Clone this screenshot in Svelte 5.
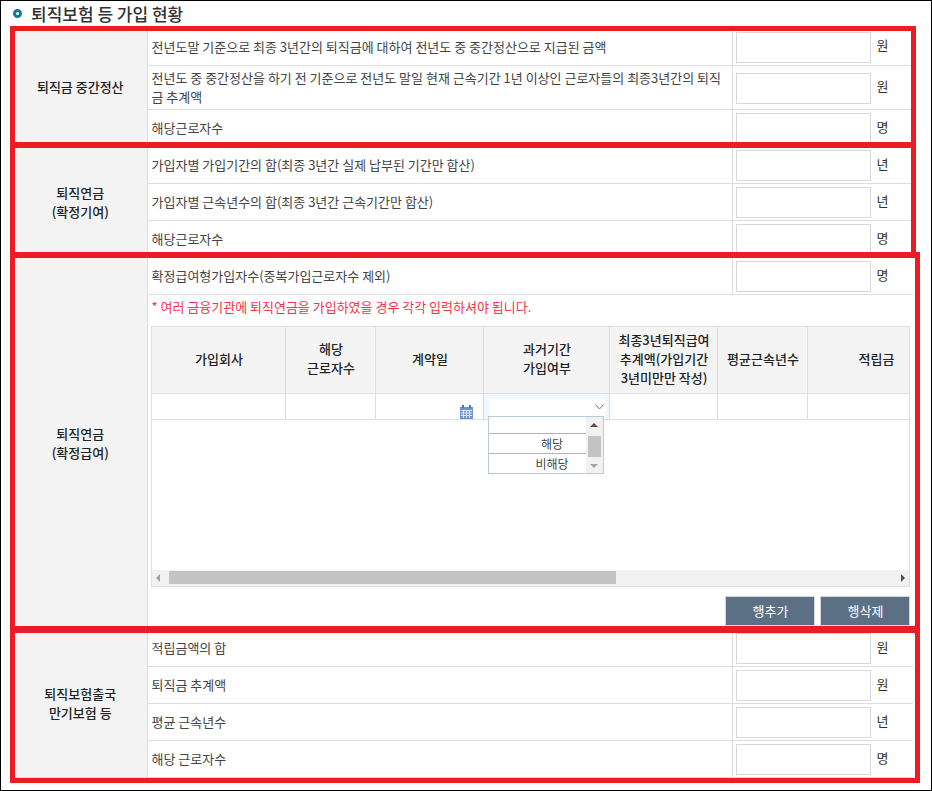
<script>
	const middle = [
		{ label: '전년도말 기준으로 최종 3년간의 퇴직금에 대하여 전년도 중 중간정산으로 지급된 금액', unit: '원' },
		{ label: '전년도 중 중간정산을 하기 전 기준으로 전년도 말일 현재 근속기간 1년 이상인 근로자들의 최종3년간의 퇴직금 추계액', unit: '원', tall: true },
		{ label: '해당근로자수', unit: '명' }
	];
	const contribution = [
		{ label: '가입자별 가입기간의 합(최종 3년간 실제 납부된 기간만 합산)', unit: '년' },
		{ label: '가입자별 근속년수의 합(최종 3년간 근속기간만 합산)', unit: '년' },
		{ label: '해당근로자수', unit: '명' }
	];
	const insurance = [
		{ label: '적립금액의 합', unit: '원' },
		{ label: '퇴직금 추계액', unit: '원' },
		{ label: '평균 근속년수', unit: '년' },
		{ label: '해당 근로자수', unit: '명' }
	];
	const columns = [
		{ title: ['가입회사'], width: 134 },
		{ title: ['해당', '근로자수'], width: 90 },
		{ title: ['계약일'], width: 108 },
		{ title: ['과거기간', '가입여부'], width: 126 },
		{ title: ['최종3년퇴직급여', '추계액(가입기간', '3년미만만 작성)'], width: 108 },
		{ title: ['평균근속년수'], width: 90 },
		{ title: ['적립금'], width: 136 }
	];
</script>

{#snippet valueCell(unit)}
	<td class="value">
		<div class="value-wrap">
			<input type="text" />
			<span class="unit">{unit}</span>
		</div>
	</td>
{/snippet}

<div class="page">
	<h2 class="title"><span class="bullet"></span>퇴직보험 등 가입 현황</h2>

	<table class="form">
		<colgroup>
			<col class="col-head" />
			<col class="col-label" />
			<col class="col-value" />
		</colgroup>
		<tbody>
			{#each middle as row, i}
				<tr class:tall={row.tall}>
					{#if i === 0}<th rowspan="3">퇴직금 중간정산</th>{/if}
					<td class="label">{row.label}</td>
					{@render valueCell(row.unit)}
				</tr>
			{/each}
			{#each contribution as row, i}
				<tr>
					{#if i === 0}<th rowspan="3">퇴직연금<br />(확정기여)</th>{/if}
					<td class="label">{row.label}</td>
					{@render valueCell(row.unit)}
				</tr>
			{/each}
			<tr>
				<th rowspan="2">퇴직연금<br />(확정급여)</th>
				<td class="label">확정급여형가입자수(중복가입근로자수 제외)</td>
				{@render valueCell('명')}
			</tr>
			<tr class="benefit">
				<td colspan="2" class="benefit-cell">
					<p class="notice">* 여러 금융기관에 퇴직연금을 가입하였을 경우 각각 입력하셔야 됩니다.</p>
					<div class="grid-box">
						<div class="grid-scroll">
							<div class="grid-row grid-head">
								{#each columns as col}
									<div class="grid-cell" style="width: {col.width}px">
										{#each col.title as line}<span>{line}</span>{/each}
									</div>
								{/each}
							</div>
							<div class="grid-row grid-body">
								{#each columns as col, i}
									<div class="grid-cell" class:active={i === 3} style="width: {col.width}px">
										{#if i === 2}
											<svg class="calendar" width="13" height="14" viewBox="0 0 13 14">
												<rect x="0" y="2" width="13" height="12" fill="#6f93cf" />
												<rect x="2" y="0" width="2" height="3" fill="#4f74b5" />
												<rect x="9" y="0" width="2" height="3" fill="#4f74b5" />
												<path d="M1 5.500h11M1 8h11M1 10.500h11M3.500 5v8M6.500 5v8M9.500 5v8" stroke="#dfe8f6" stroke-width="1" fill="none" />
											</svg>
										{/if}
										{#if i === 3}
											<div class="select">
												<svg width="9" height="6" viewBox="0 0 9 6"><path d="M0.500 0.500l4 4.500 4-4.500" stroke="#777" fill="none" /></svg>
											</div>
										{/if}
									</div>
								{/each}
							</div>
						</div>
						<div class="hscroll">
							<span class="arrow left"></span>
							<span class="hthumb"></span>
							<span class="arrow right"></span>
						</div>
						<div class="dropdown">
							<div class="options">
								<div class="option"></div>
								<div class="option">해당</div>
								<div class="option">비해당</div>
							</div>
							<div class="vscroll">
								<span class="arrow up"></span>
								<span class="vthumb"></span>
								<span class="arrow down"></span>
							</div>
						</div>
					</div>
					<div class="actions">
						<button type="button">행추가</button>
						<button type="button">행삭제</button>
					</div>
				</td>
			</tr>
			{#each insurance as row, i}
				<tr>
					{#if i === 0}<th rowspan="4">퇴직보험출국<br />만기보험 등</th>{/if}
					<td class="label">{row.label}</td>
					{@render valueCell(row.unit)}
				</tr>
			{/each}
		</tbody>
	</table>

	<!-- red review marks drawn over the form -->
	<div class="mark mark-1"></div>
	<div class="mark mark-2"></div>
	<div class="mark mark-3"></div>
	<div class="mark mark-4"></div>
</div>

<style>
	:global(body) {
		margin: 0;
		background: #fff;
	}

	.page {
		position: relative;
		box-sizing: border-box;
		width: 932px;
		height: 791px;
		padding: 0 0 0 11px;
		border: 1px solid #000;
		background: #fff;
		overflow: hidden;
		color: #333;
		font-family: "Noto Sans CJK KR", "Liberation Sans", sans-serif;
		font-size: 13px;
	}

	.title {
		display: flex;
		align-items: center;
		gap: 9px;
		height: 25px;
		margin: 0 0 2px 1px;
		font-size: 17px;
		font-weight: 500;
		color: #333;
	}

	.bullet {
		box-sizing: border-box;
		width: 9px;
		height: 9px;
		border: 3px solid #137a93;
		border-radius: 50%;
	}

	.form {
		width: 901px;
		table-layout: fixed;
		border-collapse: collapse;
	}

	.col-head { width: 135px; }
	.col-value { width: 181px; }

	tr { height: 37px; }
	tr.tall { height: 44px; }
	tr.benefit { height: 335px; }

	th {
		padding: 0 0 0 2px;
		background: #f3f3f3;
		border-bottom: 1px solid #ddd;
		font-weight: 500;
		line-height: 19px;
		text-align: center;
		color: #222;
	}

	td {
		padding: 0;
		border-bottom: 1px solid #ddd;
		border-left: 1px solid #ddd;
	}

	.label {
		padding: 0 3px 0 4px;
		line-height: 19px;
		color: #444;
	}

	.value-wrap {
		display: flex;
		align-items: center;
		gap: 6px;
		padding: 2px 0 0 3px;
	}

	input {
		box-sizing: border-box;
		width: 135px;
		height: 31px;
		margin: 0;
		padding: 0;
		border: 1px solid #d8d8d8;
		background: #fff;
	}

	.unit {
		margin-top: -5px;
		color: #333;
	}

	.benefit-cell {
		vertical-align: top;
		padding: 0 3px;
	}

	.notice {
		margin: 0;
		height: 31px;
		padding-left: 1px;
		box-sizing: border-box;
		line-height: 24px;
		color: #fb3147;
	}

	.grid-box {
		position: relative;
		box-sizing: border-box;
		width: 759px;
		height: 261px;
		border: 1px solid #ddd;
		display: flex;
		flex-direction: column;
		justify-content: space-between;
	}

	.grid-scroll { overflow: hidden; }

	.grid-row {
		display: flex;
		width: 792px;
		border-bottom: 1px solid #ddd;
	}

	.grid-cell {
		box-sizing: border-box;
		flex: none;
		border-right: 1px solid #ddd;
	}

	.grid-cell:last-child { border-right: 0; }

	.grid-head { height: 66px; background: #f4f4f4; }

	.grid-head .grid-cell {
		display: flex;
		flex-direction: column;
		align-items: center;
		justify-content: center;
		padding: 0 0 3px 2px;
		font-weight: 500;
		line-height: 19px;
		color: #222;
	}

	.grid-body { height: 26px; box-sizing: border-box; }

	.grid-body .grid-cell { position: relative; }

	.grid-cell.active { background: #f0f7ff; }

	.calendar {
		position: absolute;
		right: 10px;
		bottom: 0;
	}

	.select {
		position: absolute;
		left: 5px;
		right: 3px;
		top: 5px;
		bottom: 0;
		background: #fff;
	}

	.select svg {
		position: absolute;
		right: 2px;
		top: 5px;
	}

	.hscroll {
		position: relative;
		height: 16px;
		background: #f1f1f1;
	}

	.hthumb {
		position: absolute;
		left: 17px;
		top: 1px;
		width: 447px;
		height: 13px;
		background: #c3c3c3;
	}

	.arrow {
		position: absolute;
		width: 0;
		height: 0;
		border: 4px solid transparent;
	}

	.arrow.left { left: 4px; top: 4px; border-right-color: #a3a3a3; border-left-width: 0; }
	.arrow.right { right: 4px; top: 4px; border-left-color: #505050; border-right-width: 0; }
	.arrow.up { left: 4px; top: 6px; border-bottom-color: #505050; border-top-width: 0; }
	.arrow.down { left: 4px; bottom: 5px; border-top-color: #a3a3a3; border-bottom-width: 0; }

	.dropdown {
		position: absolute;
		left: 336px;
		top: 89px;
		box-sizing: border-box;
		display: flex;
		width: 116px;
		height: 58px;
		border: 1px solid #b9cadb;
		background: #fff;
	}

	.options { flex: 1; }

	.option {
		box-sizing: border-box;
		height: 20px;
		padding-left: 30px;
		border-bottom: 1px solid #b5b5b5;
		text-align: center;
		font-size: 12px;
		line-height: 20px;
		color: #444;
	}

	.option:first-child { height: 17px; }
	.option:last-child { border-bottom: 0; }

	.vscroll {
		position: relative;
		flex: none;
		width: 17px;
		background: #f1f1f1;
	}

	.vthumb {
		position: absolute;
		left: 2px;
		top: 19px;
		width: 13px;
		height: 21px;
		background: #c3c3c3;
	}

	.actions {
		display: flex;
		justify-content: flex-end;
		gap: 5px;
		width: 759px;
		margin-top: 9px;
	}

	button {
		box-sizing: border-box;
		width: 90px;
		height: 30px;
		padding: 0 0 0 2px;
		border: 1px solid #d5d5d5;
		background: #5b6f85;
		color: #fff;
		font: inherit;
	}

	.mark {
		position: absolute;
		box-sizing: border-box;
		border: 5px solid #ed1c24;
		pointer-events: none;
	}

	.mark-1 { left: 9px; top: 25px; width: 906px; height: 121px; }
	.mark-2 { left: 9px; top: 141px; width: 906px; height: 115px; border-width: 6px 5px 5px; }
	.mark-3 { left: 9px; top: 251px; width: 910px; height: 381px; border-width: 6px 5px 7px; }
	.mark-4 { left: 9px; top: 625px; width: 910px; height: 157px; border-width: 7px 5px 5px; }
</style>
